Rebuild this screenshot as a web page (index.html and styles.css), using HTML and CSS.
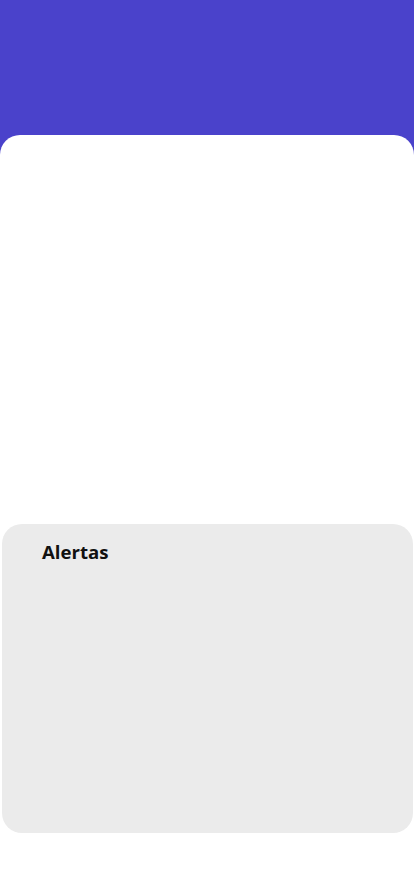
FILE: index.html
```html
<!DOCTYPE html>
<html lang="es">
<head>
<meta charset="utf-8">
<title>Alertas</title>
<link rel="stylesheet" href="styles.css">
</head>
<body>
<div class="app">
  <header class="header"></header>
  <main class="sheet">
    <div class="spacer"></div>
    <section class="alerts">
      <h2 class="alerts-title">Alertas</h2>
    </section>
  </main>
</div>
</body>
</html>
```
FILE: styles.css
```css
* { box-sizing: border-box; }
html, body { margin: 0; padding: 0; }
body {
  font-family: "Open Sans", "Noto Sans", sans-serif;
  background: #ffffff;
}
.app {
  width: 414px;
  min-height: 896px;
  background: #4a42cb;
  display: flex;
  flex-direction: column;
}
.header {
  height: 135px;
  flex: none;
}
.sheet {
  flex: 1;
  background: #ffffff;
  border-radius: 20px 20px 0 0;
  display: flex;
  flex-direction: column;
}
.spacer {
  height: 389px;
  flex: none;
}
.alerts {
  margin-left: 2px;
  width: 411px;
  height: 309px;
  background: #ebebeb;
  border-radius: 20px;
  padding: 15px 39px 16px 40px;
}
.alerts-title {
  margin: 0;
  font-size: 18.6px;
  font-weight: 700;
  line-height: 25px;
  color: #111111;
}
```
